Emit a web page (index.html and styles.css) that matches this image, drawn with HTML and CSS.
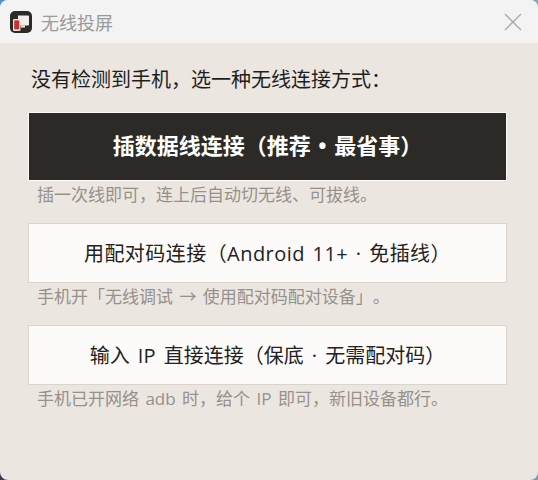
FILE: index.html
```html
<!DOCTYPE html>
<html lang="zh">
<head>
<meta charset="utf-8">
<title>无线投屏</title>
<link rel="stylesheet" href="styles.css">
</head>
<body>
<div class="window">
  <header class="titlebar">
    <svg class="app-icon" width="22" height="22" viewBox="0 0 22 22">
      <rect width="22" height="22" rx="5" fill="#2b2a27"/>
      <path d="M8 4.5h10a1 1 0 0 1 1 1v8a1 1 0 0 1-1 1H8z" fill="#f0eeea"/>
      <rect x="11" y="14.5" width="4" height="2" fill="#f0eeea"/>
      <rect x="3" y="8" width="7.5" height="12" rx="1.2" fill="#f2e6e2"/>
      <rect x="4.2" y="9.4" width="5.1" height="9" fill="#c8322e"/>
    </svg>
    <span class="title">无线投屏</span>
    <svg class="close" width="18" height="18" viewBox="0 0 18 18">
      <path d="M1 1L17 17M17 1L1 17" stroke="#aaaaaa" stroke-width="1.4" fill="none"/>
    </svg>
  </header>
  <main class="content">
    <p class="heading">没有检测到手机，选一种无线连接方式：</p>
    <button class="btn primary">插数据线连接（推荐 • 最省事）</button>
    <p class="hint">插一次线即可，连上后自动切无线、可拔线。</p>
    <button class="btn pair">用配对码连接（Android 11+ · 免插线）</button>
    <p class="hint">手机开「无线调试 → 使用配对码配对设备」。</p>
    <button class="btn direct">输入 IP 直接连接（保底 · 无需配对码）</button>
    <p class="hint">手机已开网络 adb 时，给个 IP 即可，新旧设备都行。</p>
  </main>
</div>
</body>
</html>
```
FILE: styles.css
```css
* { box-sizing: border-box; }
html, body { margin: 0; height: 100%; }
body {
  background:
    radial-gradient(circle at 0 100%, #3d3a55 0 12px, transparent 13px),
    radial-gradient(circle at 100% 100%, #7f9bb0 0 12px, transparent 13px),
    radial-gradient(circle at 100% 0, #7fa6c6 0 12px, transparent 13px),
    #4f8fd0;
  font-family: "Open Sans", "Noto Sans CJK SC", sans-serif;
  text-spacing-trim: space-all;
  overflow: hidden;
}
.window {
  width: 538px;
  height: 480px;
  background: #ebe6e0;
  border-radius: 8px;
  overflow: hidden;
  display: flex;
  flex-direction: column;
}
.titlebar {
  height: 43px;
  flex: none;
  background: #f3f3f3;
  display: flex;
  align-items: center;
  padding: 0 16px 0 10px;
}
.app-icon { flex: none; }
.title {
  margin-left: 9px;
  font-size: 18px;
  color: #9a9a9a;
  flex: 1;
}
.content {
  padding: 23px 31px 0 28px;
  display: flex;
  flex-direction: column;
}
.heading {
  margin: 0 0 19px 3px;
  height: 27px;
  font-size: 20px;
  line-height: 27px;
  color: #1f1f1f;
}
.btn {
  display: block;
  width: 479px;
  height: 60px;
  padding: 0 0 2px;
  border: 1px solid #d9d4cd;
  background: #fcfbf9;
  color: #222222;
  font: inherit;
  font-size: 20px;
}
.btn.pair { letter-spacing: 0.45px; word-spacing: 2px; }
.btn.direct { word-spacing: 3px; }
.btn.primary {
  height: 69px;
  padding-bottom: 6px;
  border: 1px solid #fdfcfa;
  background: #2b2a27;
  color: #ffffff;
  font-size: 22px;
  font-weight: 700;
  word-spacing: 2px;
}
.hint {
  margin: 2px 0 16px 9px;
  height: 24px;
  font-size: 17px;
  line-height: 24px;
  word-spacing: 2px;
  color: #96918a;
}
```
